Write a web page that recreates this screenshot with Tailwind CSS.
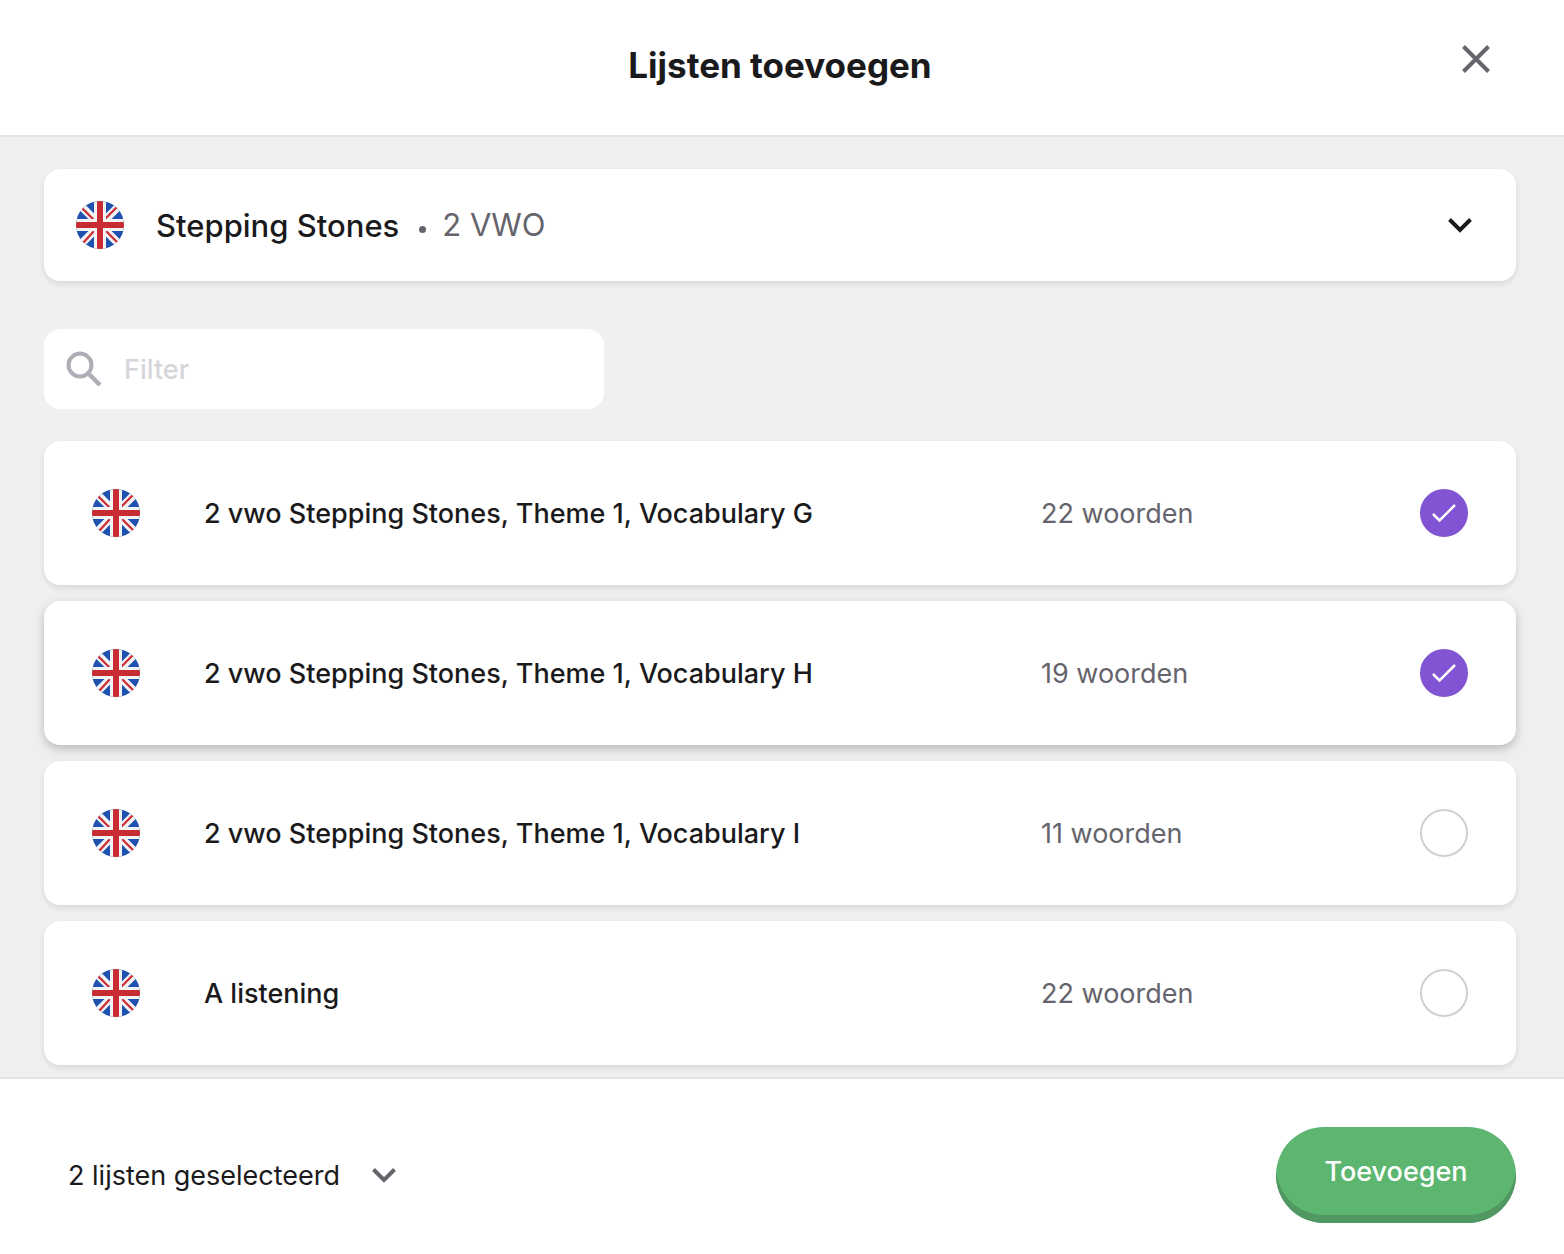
<!DOCTYPE html>
<html lang="nl">
<head>
<meta charset="utf-8">
<meta name="viewport" content="width=device-width, initial-scale=1">
<title>Lijsten toevoegen</title>
<script src="https://cdn.jsdelivr.net/npm/@tailwindcss/browser@4"></script>
</head>
<body class="flex h-screen flex-col bg-white font-['Inter',sans-serif] text-[27px] leading-8 text-[#1a1a1c]">
<svg class="hidden" aria-hidden="true">
  <symbol id="flag" viewBox="0 0 48 48">
    <path fill="#1f51b0" d="M0 0h48v48H0z"/>
    <path stroke="#f3f3f3" stroke-width="8" d="M3 3l42 42M45 3L3 45"/>
    <path stroke="#cd2a34" stroke-width="2.200" d="M6 7l13 13M41 6L28 19M19 29L7 42M29 29l13 13"/>
    <path fill="#f3f3f3" d="M18 0h12v48H18zM0 18h48v12H0z"/>
    <path fill="#c92b33" d="M21 0h6v48h-6zM0 21h48v6H0z"/>
  </symbol>
</svg>

<header class="grid shrink-0 grid-cols-[1fr_auto_1fr] items-start border-b-2 border-[#e4e4e6] pt-[19px] pr-12 pb-9 pl-11">
  <h1 class="col-start-2 pt-6 text-[35px] leading-11 font-bold">Lijsten toevoegen</h1>
  <button type="button" aria-label="Sluiten" class="flex size-20 items-center justify-center justify-self-end text-[#65646c]">
    <svg class="size-7" viewBox="0 0 28 28" fill="none" stroke="currentColor" stroke-width="4"><path d="M1.500 1.500l25 25M26.500 1.500l-25 25"/></svg>
  </button>
</header>

<main class="min-h-0 flex-1 overflow-hidden bg-[#f0f0f3] pt-8 pr-12 pl-11">
  <button type="button" aria-haspopup="listbox" class="flex h-28 w-full items-center rounded-2xl bg-white pr-11 pl-8 text-left shadow-[0_3px_6px_rgba(0,0,0,0.1)]">
    <svg class="mr-8 size-12 rounded-full" aria-hidden="true"><use href="#flag"/></svg>
    <span class="pt-0.5 text-[31px] leading-10 font-medium">Stepping Stones</span>
    <span class="mr-4 ml-5 size-[7px] translate-y-1 rounded-full bg-[#65646c]"></span>
    <span class="text-[31px] leading-10 text-[#65646c]">2 VWO</span>
    <svg class="ml-auto h-4 w-6" viewBox="0 0 24 16" fill="none" stroke="currentColor" stroke-width="4"><path d="M1.500 2.500L12 13 22.500 2.500"/></svg>
  </button>

  <label class="mt-12 flex h-20 w-140 items-center gap-5 rounded-2xl bg-white px-5">
    <svg class="size-10" viewBox="0 0 40 40" fill="none" stroke="#afaeb6" stroke-width="4" aria-hidden="true"><circle cx="16" cy="16" r="11.500"/><path stroke-width="4.500" d="M24 24l12 12"/></svg>
    <input type="text" aria-label="Filter" placeholder="Filter" class="min-w-0 flex-1 pt-0.5 font-medium outline-none placeholder:text-[#d6d6da]">
  </label>

  <ul class="mt-8 flex flex-col gap-4">
    <li>
      <label class="flex h-36 items-center rounded-2xl bg-white px-12 shadow-[0_3px_6px_rgba(0,0,0,0.1)]">
        <svg class="mr-16 size-12 rounded-full" aria-hidden="true"><use href="#flag"/></svg>
        <span class="flex-1 pt-0.5 font-medium">2 vwo Stepping Stones, Theme 1, Vocabulary G</span>
        <span class="w-[379px] pt-0.5 text-[#65646c]">22 woorden</span>
        <span class="grid size-12">
          <input type="checkbox" checked class="peer col-start-1 row-start-1 size-12 appearance-none rounded-full border-2 border-[#d0d0d4] checked:border-[#8054d2] checked:bg-[#8054d2]">
          <svg class="pointer-events-none invisible col-start-1 row-start-1 size-12 peer-checked:visible" viewBox="0 0 48 48" fill="none" stroke="white" stroke-width="2.500"><path d="M13 25l6.500 6.500L35 16"/></svg>
        </span>
      </label>
    </li>
    <li>
      <label class="flex h-36 items-center rounded-2xl bg-white px-12 shadow-[0_4px_8px_rgba(0,0,0,0.18),0_4px_24px_rgba(0,0,0,0.06)]">
        <svg class="mr-16 size-12 rounded-full" aria-hidden="true"><use href="#flag"/></svg>
        <span class="flex-1 pt-0.5 font-medium">2 vwo Stepping Stones, Theme 1, Vocabulary H</span>
        <span class="w-[379px] pt-0.5 text-[#65646c]">19 woorden</span>
        <span class="grid size-12">
          <input type="checkbox" checked class="peer col-start-1 row-start-1 size-12 appearance-none rounded-full border-2 border-[#d0d0d4] checked:border-[#8054d2] checked:bg-[#8054d2]">
          <svg class="pointer-events-none invisible col-start-1 row-start-1 size-12 peer-checked:visible" viewBox="0 0 48 48" fill="none" stroke="white" stroke-width="2.500"><path d="M13 25l6.500 6.500L35 16"/></svg>
        </span>
      </label>
    </li>
    <li>
      <label class="flex h-36 items-center rounded-2xl bg-white px-12 shadow-[0_3px_6px_rgba(0,0,0,0.1)]">
        <svg class="mr-16 size-12 rounded-full" aria-hidden="true"><use href="#flag"/></svg>
        <span class="flex-1 pt-0.5 font-medium">2 vwo Stepping Stones, Theme 1, Vocabulary I</span>
        <span class="w-[379px] pt-0.5 text-[#65646c]">11 woorden</span>
        <span class="grid size-12">
          <input type="checkbox" class="peer col-start-1 row-start-1 size-12 appearance-none rounded-full border-2 border-[#d0d0d4] checked:border-[#8054d2] checked:bg-[#8054d2]">
          <svg class="pointer-events-none invisible col-start-1 row-start-1 size-12 peer-checked:visible" viewBox="0 0 48 48" fill="none" stroke="white" stroke-width="2.500"><path d="M13 25l6.500 6.500L35 16"/></svg>
        </span>
      </label>
    </li>
    <li>
      <label class="flex h-36 items-center rounded-2xl bg-white px-12 shadow-[0_3px_6px_rgba(0,0,0,0.1)]">
        <svg class="mr-16 size-12 rounded-full" aria-hidden="true"><use href="#flag"/></svg>
        <span class="flex-1 pt-0.5 font-medium">A listening</span>
        <span class="w-[379px] pt-0.5 text-[#65646c]">22 woorden</span>
        <span class="grid size-12">
          <input type="checkbox" class="peer col-start-1 row-start-1 size-12 appearance-none rounded-full border-2 border-[#d0d0d4] checked:border-[#8054d2] checked:bg-[#8054d2]">
          <svg class="pointer-events-none invisible col-start-1 row-start-1 size-12 peer-checked:visible" viewBox="0 0 48 48" fill="none" stroke="white" stroke-width="2.500"><path d="M13 25l6.500 6.500L35 16"/></svg>
        </span>
      </label>
    </li>
  </ul>
</main>

<footer class="flex shrink-0 items-center justify-between border-t-2 border-[#e4e4e6] pt-12 pr-12 pb-[31px] pl-17">
  <button type="button" aria-expanded="false" class="flex items-center gap-8">
    <span class="pt-0.5">2 lijsten geselecteerd</span>
    <svg class="h-4 w-6 text-[#65646c]" viewBox="0 0 24 16" fill="none" stroke="currentColor" stroke-width="4"><path d="M1.500 2.500L12 13 22.500 2.500"/></svg>
  </button>
  <button type="submit" class="h-24 w-60 rounded-[48px] bg-[#5cb670] pb-1.5 font-medium text-white shadow-[inset_0_-8px_0_#519763]">Toevoegen</button>
</footer>
</body>
</html>
